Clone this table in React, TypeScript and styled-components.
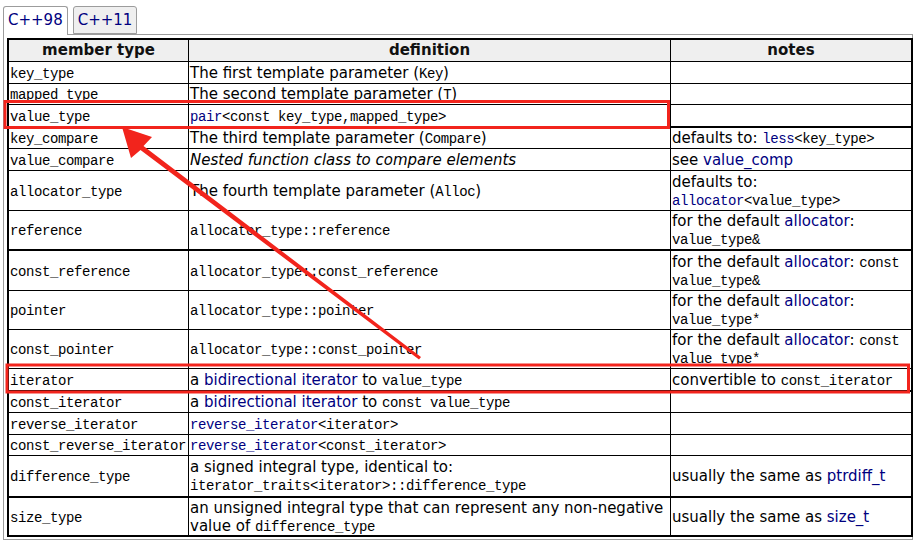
import React from 'react';
import styled, { createGlobalStyle, css } from 'styled-components';

const GlobalStyle = createGlobalStyle`
  html, body {
    margin: 0;
    padding: 0;
    background: #fff;
  }
  body {
    font-family: "DejaVu Sans", Verdana, sans-serif;
    font-size: 15px;
    color: #000;
  }
`;

const LINK = '#00007f';

type Cell = React.ReactNode;
type Row = { name: string; def: Cell; notes?: Cell; h: number; thick?: boolean };

const mono = css`
  font-family: "Liberation Mono", "DejaVu Sans Mono", monospace;
  font-size: 14px;
  letter-spacing: -0.4px;
`;

const Code = styled.code`
  ${mono}
  line-height: 1;
`;

const Link = styled.span<{ $mono?: boolean }>`
  color: ${LINK};
  line-height: 1;
  ${(p) => p.$mono && mono}
`;

// row heights (incl. bottom border) as measured in the reference
const rows: Row[] = [
  { name: 'key_type', h: 22, def: <>The first template parameter (<Code>Key</Code>)</> },
  { name: 'mapped_type', h: 21, def: <>The second template parameter (<Code>T</Code>)</> },
  {
    name: 'value_type',
    h: 23,
    def: (
      <Code>
        <Link $mono>pair</Link>&lt;const key_type,mapped_type&gt;
      </Code>
    ),
    thick: true,
  },
  {
    name: 'key_compare',
    h: 21,
    def: <>The third template parameter (<Code>Compare</Code>)</>,
    notes: (
      <>
        defaults to:{' '}
        <Code>
          <Link $mono>less</Link>&lt;key_type&gt;
        </Code>
      </>
    ),
  },
  {
    name: 'value_compare',
    h: 22,
    def: <i>Nested function class to compare elements</i>,
    notes: (
      <>
        see <Link>value_comp</Link>
      </>
    ),
  },
  {
    name: 'allocator_type',
    h: 40,
    def: <>The fourth template parameter (<Code>Alloc</Code>)</>,
    notes: (
      <>
        defaults to:
        <br />
        <Code>
          <Link $mono>allocator</Link>&lt;value_type&gt;
        </Code>
      </>
    ),
  },
  {
    name: 'reference',
    h: 40,
    def: <Code>allocator_type::reference</Code>,
    notes: (
      <>
        for the default <Link>allocator</Link>:
        <br />
        <Code>value_type&amp;</Code>
      </>
    ),
    thick: true,
  },
  {
    name: 'const_reference',
    h: 40,
    def: <Code>allocator_type::const_reference</Code>,
    notes: (
      <>
        for the default <Link>allocator</Link>: <Code>const</Code>
        <br />
        <Code>value_type&amp;</Code>
      </>
    ),
  },
  {
    name: 'pointer',
    h: 39,
    def: <Code>allocator_type::pointer</Code>,
    notes: (
      <>
        for the default <Link>allocator</Link>:
        <br />
        <Code>value_type*</Code>
      </>
    ),
  },
  {
    name: 'const_pointer',
    h: 39,
    def: <Code>allocator_type::const_pointer</Code>,
    notes: (
      <>
        for the default <Link>allocator</Link>: <Code>const</Code>
        <br />
        <Code>value_type*</Code>
      </>
    ),
  },
  {
    name: 'iterator',
    h: 23,
    def: (
      <>
        a <Link>bidirectional iterator</Link> to <Code>value_type</Code>
      </>
    ),
    notes: (
      <>
        convertible to <Code>const_iterator</Code>
      </>
    ),
    thick: true,
  },
  {
    name: 'const_iterator',
    h: 21,
    def: (
      <>
        a <Link>bidirectional iterator</Link> to <Code>const value_type</Code>
      </>
    ),
  },
  {
    name: 'reverse_iterator',
    h: 22,
    def: (
      <Code>
        <Link $mono>reverse_iterator</Link>&lt;iterator&gt;
      </Code>
    ),
  },
  {
    name: 'const_reverse_iterator',
    h: 21,
    def: (
      <Code>
        <Link $mono>reverse_iterator</Link>&lt;const_iterator&gt;
      </Code>
    ),
  },
  {
    name: 'difference_type',
    h: 42,
    def: (
      <>
        a signed integral type, identical to:
        <br />
        <Code>iterator_traits&lt;iterator&gt;::difference_type</Code>
      </>
    ),
    notes: (
      <>
        usually the same as <Link>ptrdiff_t</Link>
      </>
    ),
    thick: true,
  },
  {
    name: 'size_type',
    h: 37,
    def: (
      <>
        an unsigned integral type that can represent any non-negative
        <br />
        value of <Code>difference_type</Code>
      </>
    ),
    notes: (
      <>
        usually the same as <Link>size_t</Link>
      </>
    ),
  },
];

export default function App() {
  return (
    <>
      <GlobalStyle />
      <S.Page>
        <S.Tabs>
          <S.Tab $active>C++98</S.Tab>
          <S.Tab>C++11</S.Tab>
        </S.Tabs>
        <S.Panel>
          <S.Table>
            <colgroup>
              <col style={{ width: 180 }} />
              <col style={{ width: 482 }} />
              <col style={{ width: 240 }} />
            </colgroup>
            <thead>
              <tr>
                <S.Th>member type</S.Th>
                <S.Th>definition</S.Th>
                <S.Th $last>notes</S.Th>
              </tr>
            </thead>
            <tbody>
              {rows.map((r, i) => {
                const lastRow = i === rows.length - 1;
                return (
                  <S.Tr key={r.name} $h={r.h}>
                    <S.Td $thick={r.thick} $lastRow={lastRow}>
                      <Code>{r.name}</Code>
                    </S.Td>
                    <S.Td $thick={r.thick} $lastRow={lastRow}>
                      {r.def}
                    </S.Td>
                    <S.Td $thick={r.thick} $lastRow={lastRow} $last>
                      {r.notes}
                    </S.Td>
                  </S.Tr>
                );
              })}
            </tbody>
          </S.Table>
        </S.Panel>
        <S.Overlay width="919" height="547" viewBox="0 0 919 547">
          <rect x="5" y="101.5" width="663.5" height="26" fill="none" stroke="#f2241c" strokeWidth="3" />
          <rect x="7" y="365" width="901.5" height="27" fill="none" stroke="#f2241c" strokeWidth="3" />
          <polygon
            points="122,127 152,137 143.5,146 421,357 419,359.5 140.5,150 131,158"
            fill="#f2241c"
          />
        </S.Overlay>
      </S.Page>
    </>
  );
}

const S: any = {};
S.Page = styled.div`
  position: relative;
  width: 919px;
  height: 547px;
  padding: 6px 0 0 3px;
  box-sizing: border-box;
  overflow: hidden;
`;
S.Tabs = styled.div`
  display: flex;
  align-items: flex-start;
  gap: 5px;
  position: relative;
  z-index: 1;
`;
S.Tab = styled.div<{ $active?: boolean }>`
  box-sizing: border-box;
  height: ${(p) => (p.$active ? 29 : 28)}px;
  margin-bottom: ${(p) => (p.$active ? -1 : 0)}px;
  padding: 0 4px;
  line-height: 27px;
  font-size: 15px;
  color: ${LINK};
  border: 1px solid #9c9c9c;
  border-bottom: ${(p) => (p.$active ? 'none' : '1px solid #9c9c9c')};
  border-radius: 3px 3px 0 0;
  background: ${(p) => (p.$active ? '#fff' : '#efefef')};
`;
S.Panel = styled.div`
  box-sizing: border-box;
  width: 910px;
  border: 1px solid #9c9c9c;
  padding: 3px 3px 2px 3px;
`;
S.Table = styled.table`
  width: 902px;
  table-layout: fixed;
  border-collapse: separate;
  border-spacing: 0;
  border: 2px solid #000;
`;
S.Tr = styled.tr<{ $h: number }>`
  height: ${(p) => p.$h}px;
`;
S.Th = styled.th<{ $last?: boolean }>`
  background: #efefef;
  font-weight: bold;
  font-size: 15px;
  line-height: 18px;
  height: 22px;
  box-sizing: border-box;
  padding: 1px 0 2px;
  text-align: center;
  border-right: ${(p) => (p.$last ? 'none' : '1px solid #000')};
  border-bottom: 1px solid #000;
  color: #111;
`;
S.Td = styled.td<{ $thick?: boolean; $lastRow?: boolean; $last?: boolean }>`
  padding: 0 1px;
  line-height: 18px;
  vertical-align: middle;
  white-space: nowrap;
  overflow: hidden;
  border-right: ${(p) => (p.$last ? 'none' : '1px solid #000')};
  border-bottom: ${(p) => (p.$lastRow ? 'none' : p.$thick ? '2px solid #000' : '1px solid #000')};
`;
S.Overlay = styled.svg`
  position: absolute;
  left: 0;
  top: 0;
  pointer-events: none;
  z-index: 2;
`;
